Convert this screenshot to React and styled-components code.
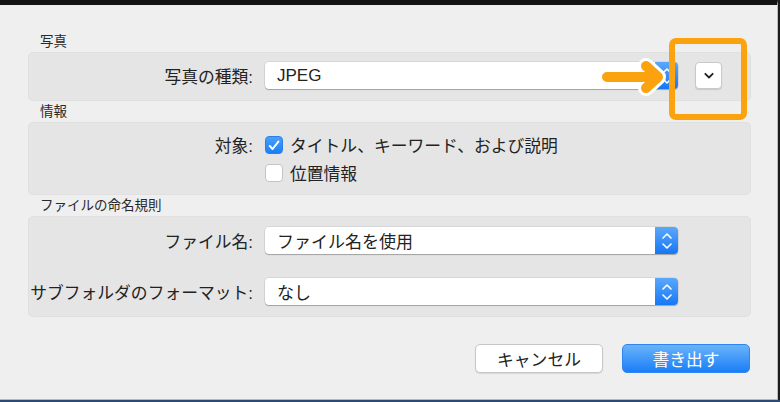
import React from 'react'
import styled, { createGlobalStyle, css } from 'styled-components'

const GlobalStyle = createGlobalStyle`
  html, body {
    margin: 0;
    padding: 0;
    background: #1b1b1b;
  }
  body {
    font-family: "Liberation Sans", "Noto Sans CJK JP", sans-serif;
    color: #222;
  }
`

const Screen = styled.div`
  width: 780px;
  height: 402px;
  box-sizing: border-box;
  background: #1c1c1c;
  border-bottom: 2px solid #2c4a72;
  overflow: hidden;
`

const Dialog = styled.div`
  position: relative;
  width: 778px;
  height: 400px;
  box-sizing: border-box;
  border-top: 5px solid #131313;
  border-right: 1px solid #bdbdbd;
  border-bottom: 1px solid #b9b9b9;
  background: #efefef;
  padding: 29px 0 0 0;
  display: flex;
  flex-direction: column;
`

const SectionTitle = styled.div`
  font-size: 13.5px;
  line-height: 16px;
  height: 16px;
  padding-left: 40px;
  margin: ${({ first }) => (first ? '0' : '3px')} 0 2px 0;
  color: #2a2a2a;
`

const Group = styled.div`
  margin: 0 26px 0 28px;
  box-sizing: border-box;
  background: #e5e5e5;
  border: 1px solid #e0e0e0;
  border-radius: 5px;
  display: flex;
  flex-direction: column;
  gap: ${({ gap }) => gap || 0}px;
  padding: ${({ pad }) => pad};
`

const Row = styled.div`
  display: flex;
  align-items: center;
  height: ${({ h }) => h || 27}px;
`

const Label = styled.div`
  width: 224px;
  flex: none;
  text-align: right;
  font-size: 16.8px;
  white-space: nowrap;
  padding-right: 12px;
  box-sizing: content-box;
`

const Spacer = styled.div`
  width: 236px;
  flex: none;
`

const Popup = styled.div`
  position: relative;
  width: 413px;
  height: 27px;
  box-sizing: border-box;
  background: #fff;
  border-radius: 4px;
  box-shadow: 0 0 0 0.5px rgba(0, 0, 0, 0.12), 0 1px 1px rgba(0, 0, 0, 0.25);
  display: flex;
  align-items: center;
  font-size: 17px;
  padding-left: 12px;
`

const Stepper = styled.div`
  position: absolute;
  right: 0;
  top: 0;
  bottom: 0;
  width: 23px;
  border-radius: 0 4px 4px 0;
  background: linear-gradient(#5aa8fb, #1677f5);
  display: flex;
  align-items: center;
  justify-content: center;
`

const SmallButton = styled.div`
  margin-left: 17px;
  width: 27px;
  height: 27px;
  box-sizing: border-box;
  background: #fff;
  border: 1px solid #c9c9c9;
  border-radius: 4px;
  box-shadow: 0 1px 1px rgba(0, 0, 0, 0.12);
  display: flex;
  align-items: center;
  justify-content: center;
`

const CheckRow = styled.label`
  display: flex;
  align-items: center;
  height: 28px;
  font-size: 16.8px;
`

const Box = styled.span`
  width: 18px;
  height: 18px;
  box-sizing: border-box;
  border-radius: 4px;
  margin-right: 7px;
  display: inline-flex;
  align-items: center;
  justify-content: center;
  ${({ checked }) =>
    checked
      ? css`
          background: linear-gradient(#4aa0fa, #1b7ff5);
          border: 1px solid #2b80e8;
        `
      : css`
          background: #fff;
          border: 1px solid #c4c4c4;
        `}
`

const Footer = styled.div`
  display: flex;
  justify-content: flex-end;
  gap: 19px;
  margin: 27px 27px 0 0;
`

const Button = styled.div`
  width: 128px;
  height: 29px;
  box-sizing: border-box;
  border-radius: 5px;
  display: flex;
  align-items: center;
  justify-content: center;
  font-size: 16.8px;
  ${({ primary }) =>
    primary
      ? css`
          color: #fff;
          background: linear-gradient(#6ab3fb, #1a7ef6);
          border: 1px solid #2f86ee;
        `
      : css`
          color: #222;
          background: #fff;
          border: 1px solid #c6c6c6;
          box-shadow: 0 1px 1px rgba(0, 0, 0, 0.1);
        `}
`

const Highlight = styled.div`
  position: absolute;
  left: 669px;
  top: 33px;
  width: 78px;
  height: 82px;
  box-sizing: border-box;
  border: 6px solid #faa30f;
  border-radius: 7px;
`

const Arrow = styled.svg`
  position: absolute;
  left: 0;
  top: -5px;
  pointer-events: none;
`

const Updown = () => (
  <svg width="12" height="20" viewBox="0 0 12 20">
    <path d="M2 7 L6 3 L10 7 M2 13 L6 17 L10 13" fill="none" stroke="#fff" strokeWidth="1.6" strokeLinecap="round" strokeLinejoin="round" />
  </svg>
)

const Chevron = () => (
  <svg width="12" height="8" viewBox="0 0 12 8">
    <path d="M2.3 1.8 L6 5.5 L9.7 1.8" fill="none" stroke="#222" strokeWidth="1.8" strokeLinecap="round" strokeLinejoin="round" />
  </svg>
)

const Tick = () => (
  <svg width="12" height="11" viewBox="0 0 12 11">
    <path d="M1.8 6 L4.6 9 L10.4 1.6" fill="none" stroke="#fff" strokeWidth="2" strokeLinecap="round" strokeLinejoin="round" />
  </svg>
)

const Select = ({ value }) => (
  <Popup>
    {value}
    <Stepper>
      <Updown />
    </Stepper>
  </Popup>
)

const Check = ({ checked, children }) => (
  <CheckRow>
    <Box checked={checked}>{checked && <Tick />}</Box>
    {children}
  </CheckRow>
)

export default function App() {
  return (
    <Screen>
      <GlobalStyle />
      <Dialog>
        <SectionTitle first>写真</SectionTitle>
        <Group pad="9px 0 11px 0">
          <Row>
            <Label>写真の種類:</Label>
            <Select value="JPEG" />
            <SmallButton>
              <Chevron />
            </SmallButton>
          </Row>
        </Group>

        <SectionTitle>情報</SectionTitle>
        <Group pad="8px 0 7px 0">
          <Row h={28}>
            <Label>対象:</Label>
            <Check checked>タイトル、キーワード、および説明</Check>
          </Row>
          <Row h={28}>
            <Spacer />
            <Check>位置情報</Check>
          </Row>
        </Group>

        <SectionTitle>ファイルの命名規則</SectionTitle>
        <Group pad="10px 0 11px 0" gap={24}>
          <Row>
            <Label>ファイル名:</Label>
            <Select value="ファイル名を使用" />
          </Row>
          <Row>
            <Label>サブフォルダのフォーマット:</Label>
            <Select value="なし" />
          </Row>
        </Group>

        <Footer>
          <Button>キャンセル</Button>
          <Button primary>書き出す</Button>
        </Footer>

        <Highlight />
        <Arrow width="780" height="120" viewBox="0 0 780 120">
          <path d="M607 77 H655 M646 66 L658 77 L646 88" fill="none" stroke="#fff" strokeWidth="16" strokeLinecap="round" strokeLinejoin="round" />
          <path d="M607 77 H655 M646 66 L658 77 L646 88" fill="none" stroke="#faa30f" strokeWidth="10" strokeLinecap="round" strokeLinejoin="round" />
        </Arrow>
      </Dialog>
    </Screen>
  )
}
